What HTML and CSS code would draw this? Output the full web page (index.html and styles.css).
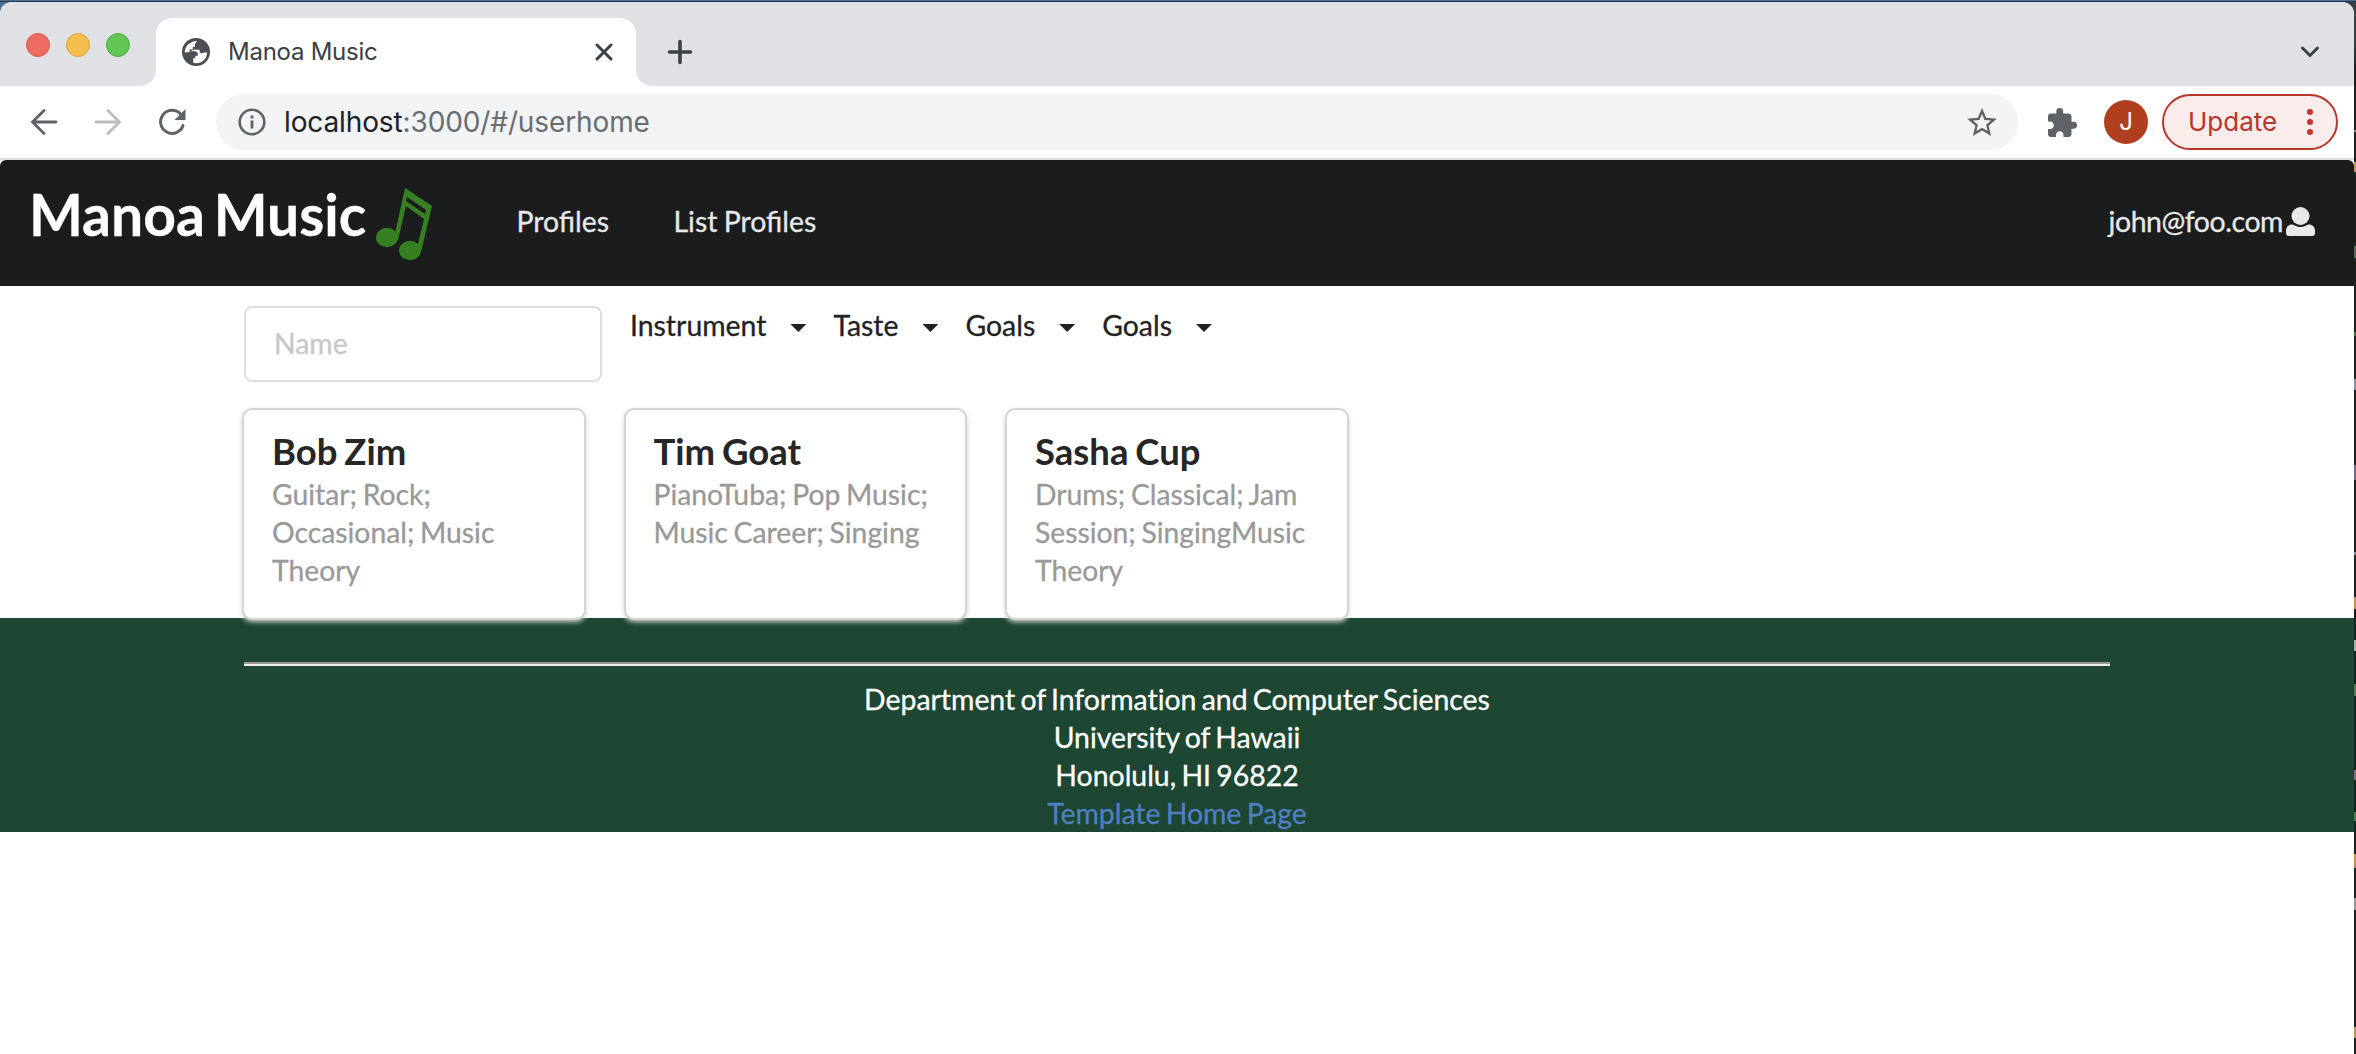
FILE: index.html
```html
<!DOCTYPE html>
<html lang="en">
<head>
<meta charset="utf-8">
<title>Manoa Music</title>
<link rel="stylesheet" href="styles.css">
</head>
<body>
<div class="window">
  <div class="tabstrip">
    <div class="lights"><i class="red"></i><i class="yellow"></i><i class="green"></i></div>
    <div class="tab">
      <svg class="favicon" viewBox="2 2 20 20"><circle cx="12" cy="12" r="10" fill="#4b4e54"/><path fill="#fff" d="M4 12.300C3.900 8 7.500 4.300 12.800 4.100L11.200 6.300v1.900H9.700v2H7.300v1.300h3.700c1.500 0 2.300.9 2.300 2v1.200h-1.800v1.800H10v3.200c5 1.200 9.800-2 10-7.400h-2.200c-.8 0-1.100.7-1.700.7-.8 0-1.500-.7-1.500-1.600v-1h-3V10l-2 .7c-2 1-3 1.600-5.300 1.600z"/></svg>
      <span class="tab-title">Manoa Music</span>
      <svg class="close" viewBox="0 0 18 18"><path d="M2 2l14 14M16 2L2 16" stroke="#3c4043" stroke-width="3" stroke-linecap="round"/></svg>
    </div>
    <svg class="plus" viewBox="0 0 24 24"><path d="M12 1.500v21M1.500 12h21" stroke="#3c4043" stroke-width="3.600" stroke-linecap="round"/></svg>
    <svg class="chevron" viewBox="0 0 20 14"><path d="M2.500 3l7.500 7.500L17.500 3" fill="none" stroke="#3c4043" stroke-width="3" stroke-linecap="round"/></svg>
  </div>
  <div class="toolbar">
    <svg class="tool back" viewBox="0 0 28 28"><path d="M26 14H3M14 2.500L2.500 14 14 25.500" fill="none" stroke="#5f6368" stroke-width="2.800" stroke-linecap="round"/></svg>
    <svg class="tool forward" viewBox="0 0 28 28"><path d="M2 14h23M14 2.500L25.500 14 14 25.500" fill="none" stroke="#babcbe" stroke-width="2.800" stroke-linecap="round"/></svg>
    <svg class="tool reload" viewBox="0 0 28 28"><path d="M25 17.500A11.500 11.500 0 1 1 22.500 6" fill="none" stroke="#5f6368" stroke-width="3" stroke-linecap="round"/><path d="M27.500 1v11h-11z" fill="#5f6368"/></svg>
    <div class="omnibox">
      <svg class="info" viewBox="0 0 28 28"><circle cx="14" cy="14" r="12.300" fill="none" stroke="#5f6368" stroke-width="2.600"/><path d="M14 12.500v8M14 7.500v3" stroke="#5f6368" stroke-width="2.800"/></svg>
      <span class="url"><b>localhost</b>:3000/#/userhome</span>
      <svg class="star" viewBox="2 2 20 19"><path fill="#5f6368" d="M22 9.240l-7.190-.62L12 2 9.190 8.630 2 9.240l5.460 4.730L5.820 21 12 17.270 18.180 21l-1.630-7.030L22 9.240zM12 15.400l-3.760 2.270 1-4.280-3.320-2.880 4.380-.38L12 6.100l1.710 4.040 4.380.38-3.320 2.880 1 4.280L12 15.400z"/></svg>
    </div>
    <svg class="puzzle" viewBox="2 1 21 21"><path fill="#5f6368" d="M20.500 11H19V7c0-1.100-.9-2-2-2h-4V3.500a2.500 2.500 0 0 0-5 0V5H4c-1.100 0-1.990.9-1.990 2v3.800H3.500c1.490 0 2.700 1.210 2.700 2.700s-1.210 2.700-2.700 2.700H2V20c0 1.100.9 2 2 2h3.800v-1.500c0-1.490 1.210-2.700 2.700-2.700s2.700 1.210 2.700 2.700V22H17c1.100 0 2-.9 2-2v-4h1.500a2.500 2.500 0 0 0 0-5z"/></svg>
    <span class="avatar">J</span>
    <span class="update"><span>Update</span><svg viewBox="0 0 6 28"><g fill="#c5352a"><circle cx="3" cy="4" r="3"/><circle cx="3" cy="14" r="3"/><circle cx="3" cy="24" r="3"/></g></svg></span>
  </div>
  <nav class="navbar">
    <span class="brand">Manoa Music</span>
    <svg class="note" viewBox="0 0 56 72"><g fill="#378021"><ellipse cx="11" cy="49.500" rx="11" ry="9.700"/><ellipse cx="34" cy="62.500" rx="11" ry="9.700"/><path fill-rule="evenodd" d="M29 0l27 18-11 46-4-4 7-29-18-13-8 34-4-2zM31 9l-1 4 19 13 1-4z"/></g></svg>
    <a class="profiles">Profiles</a>
    <a class="list">List Profiles</a>
    <a class="user"><span>john@foo.com</span><svg viewBox="0 0 29 29"><g fill="#e8e8e8"><circle cx="14.500" cy="9" r="9"/><path d="M0 24c0-4 2.500-6.500 6-6.500 2 0 4 2.500 8.500 2.500s6.500-2.500 8.500-2.500c3.500 0 6 2.500 6 6.500v2q0 3-3 3H3q-3 0-3-3z"/></g></svg></a>
  </nav>
  <main class="container">
    <div class="filters">
      <input class="name" placeholder="Name">
      <span class="dropdown">Instrument</span>
      <span class="dropdown">Taste</span>
      <span class="dropdown">Goals</span>
      <span class="dropdown">Goals</span>
    </div>
    <div class="cards">
      <article class="card"><h2>Bob Zim</h2><p>Guitar; Rock;<br>Occasional; Music<br>Theory</p></article>
      <article class="card"><h2>Tim Goat</h2><p>PianoTuba; Pop Music;<br>Music Career; Singing</p></article>
      <article class="card"><h2>Sasha Cup</h2><p>Drums; Classical; Jam<br>Session; SingingMusic<br>Theory</p></article>
    </div>
  </main>
  <footer class="footer">
    <hr>
    <div>Department of Information and Computer Sciences</div>
    <div>University of Hawaii</div>
    <div>Honolulu, HI 96822</div>
    <a>Template Home Page</a>
  </footer>
</div>
</body>
</html>
```
FILE: styles.css
```css
* { box-sizing: border-box; }
body {
  margin: 0; height: 1054px; padding: 2px 2px 0 0; overflow: hidden;
  /* desktop edge above the window, and the editor window behind it on the right */
  background:
    linear-gradient(#4a6f97 0 1px, #25364a 1px 2px) 0 0 / 100% 2px no-repeat,
    linear-gradient(#4a6f97, #4a6f97) 0 0 / 20px 20px no-repeat,
    linear-gradient(#3a4145 0 40px, #1e1f21 70px 130px, #888 130px 132px, #1e1f21 132px 162px, #c4924a 162px 172px, #1e1f21 172px 246px, #4f7043 246px 258px, #1e1f21 258px 332px, #3f7038 332px 336px, #1e1f21 336px 379px, #8b94a5 379px 390px, #1e1f21 390px 465px, #84609a 465px 480px, #1e1f21 480px 552px, #7d87a5 552px 555px, #1e1f21 555px 597px, #c4924a 597px 609px, #1e1f21 609px 640px, #aaa 640px 651px, #1e1f21 651px 684px, #57744a 684px 696px, #1e1f21 696px 770px, #84609a 770px 780px, #1e1f21 780px 812px, #57744a 812px 821px, #1e1f21 821px 854px, #c4924a 854px 868px, #1e1f21 868px 898px, #999 898px 910px, #1e1f21 910px 1027px, #c4924a 1027px 1038px, #1e1f21 1038px) 100% 0 / 20px 100% no-repeat;
  font: 28.4px/38px Lato, sans-serif; word-spacing: -2px;
}
svg { display: block; flex: none; overflow: visible; }
.window { height: 1052px; border-radius: 12px 12px 0 0; overflow: hidden; background: #fff; }

.tabstrip { display: flex; height: 84px; padding-left: 26px; background: #dfe1e5; }
.lights { display: flex; gap: 16px; padding-top: 31px; width: 130px; }
.lights i { width: 24px; height: 24px; border-radius: 50%; border: 1px solid #d9594d; background: #ed6b60; }
.lights .yellow { background: #f5bf4f; border-color: #d8a13a; }
.lights .green { background: #62c655; border-color: #4fa73e; }
.tab { position: relative; display: flex; align-items: center; width: 480px; height: 68px; margin-top: 16px; padding: 0 23px 0 26px; background: #fff; border-radius: 16px 16px 0 0; }
.tab::before, .tab::after { content: ""; position: absolute; bottom: 0; width: 16px; height: 16px; left: -16px; background: radial-gradient(circle at 0 0, transparent 15.500px, #fff 16px); }
.tab::after { left: auto; right: -16px; background: radial-gradient(circle at 100% 0, transparent 15.500px, #fff 16px); }
.favicon { width: 28px; height: 28px; }
.tab-title { flex: 1; margin-left: 18px; font: 24px/30px Inter, sans-serif; letter-spacing: -.1px; word-spacing: 0; color: #3c4043; letter-spacing: -.25px; }
.close { width: 18px; height: 18px; }
.plus { width: 24px; height: 24px; margin: 38px 0 0 32px; }
.chevron { width: 20px; height: 14px; margin: 43px 34px 0 auto; }

.toolbar { display: flex; align-items: center; height: 74px; padding: 0 16px 0 30px; border-bottom: 2px solid #dcdddd; }
.tool { width: 28px; height: 28px; margin-right: 36px; }
.reload { margin-right: 30px; }
.omnibox { display: flex; align-items: center; width: 1802px; height: 56px; padding: 0 21px 0 22px; border-radius: 28px; background: #f1f3f4; }
.info { width: 28px; height: 28px; }
.url { flex: 1; margin-left: 18px; font: 28px/40px Inter, sans-serif; letter-spacing: -.12px; color: #6a6d70; }
.url b { font-weight: 400; color: #202124; }
.star { width: 30px; height: 28px; }
.puzzle { width: 29px; height: 29px; margin-left: 30px; }
.avatar { width: 44px; height: 44px; margin-left: 27px; border-radius: 50%; background: #b03f1f; color: #fff; font: 24px/44px Inter, sans-serif; text-align: center; }
.update { display: flex; align-items: center; justify-content: space-between; width: 176px; height: 56px; margin-left: 14px; padding: 0 23px 0 24px; border: 2px solid #b93429; border-radius: 28px; background: #faeceb; color: #b93429; font: 26px/40px Inter, sans-serif; }
.update svg { width: 6px; height: 28px; }

.navbar { display: flex; height: 126px; padding: 0 39px 0 29px; background: #1b1c1d; border-radius: 6px 6px 0 0; color: #e8e8e8; line-height: 38px; -webkit-text-stroke: .3px; }
.brand { width: 347px; padding-top: 18px; font-size: 57px; line-height: 72px; font-weight: 700; color: #fff; white-space: nowrap; word-spacing: -5px; }
.note { width: 56px; height: 72px; margin-top: 28px; }
.profiles { width: 157px; margin: 42px 0 0 84.500px; }
.list { margin-top: 42px; word-spacing: -1px; }
.user { display: flex; margin: 42px 0 0 auto; letter-spacing: -.42px; }
.user svg { width: 29px; height: 29px; margin: 5px 0 0 3px; }

.container { width: 1870px; margin-left: 242px; height: 332px; padding-top: 20px; }
.filters { display: flex; height: 102px; padding-left: 2px; color: #212223; -webkit-text-stroke: .3px; }
.name { width: 358px; height: 76px; margin-right: 28px; padding: 0 28px 2px; border: 2px solid #dedfdf; border-radius: 8px; font: inherit; }
.name::placeholder { color: #c7c7c7; opacity: 1; }
.dropdown { display: flex; height: 38px; margin-right: 27px; }
.dropdown::after { content: ""; width: 16px; height: 8px; margin: 18px 0 0 24px; background: #212223; clip-path: polygon(0 0, 100% 0, 50% 100%); }
.cards { position: relative; display: flex; gap: 38px; }
.card { width: 343.500px; height: 212px; padding: 22px 28px; border: 2px solid #d4d4d5; border-radius: 10px; background: #fff; box-shadow: 0 2px 5px #d4d4d5; }
.card h2 { margin: 0; font-size: 36.500px; line-height: 38px; color: #262627; word-spacing: -2px; }
.card p { margin: 5px 0 0; color: #999; white-space: nowrap; font-size: 28.300px; word-spacing: -1.500px; -webkit-text-stroke: .3px; }

.footer { height: 214px; padding: 44px 244px 0; background: #1d4633; color: #fff; text-align: center; font-variant-ligatures: no-common-ligatures; -webkit-text-stroke: .3px; }
.footer hr { height: 4px; margin: 0 0 14px; border: 0; background: linear-gradient(#999 50%, #eee 50%); }
.footer a { color: #4f80c2; }
```
